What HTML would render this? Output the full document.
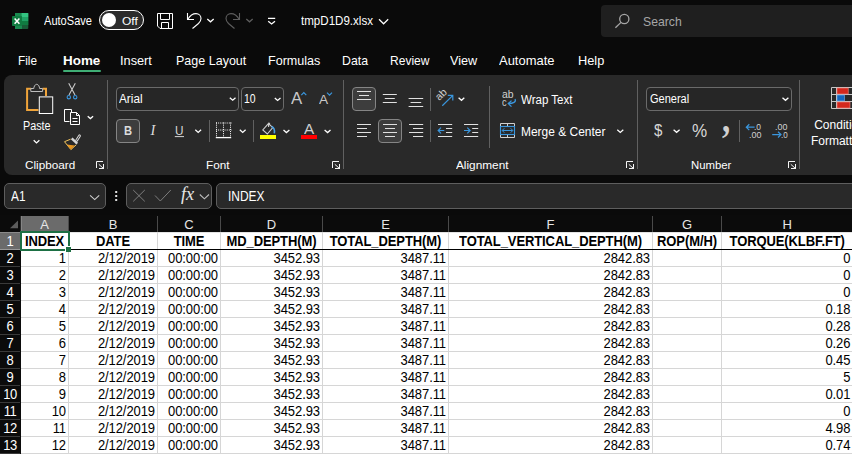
<!DOCTYPE html>
<html lang="en">
<head>
<meta charset="utf-8">
<title>tmpD1D9.xlsx - Excel</title>
<style>
html,body{margin:0;padding:0;overflow:hidden;}
body{width:852px;height:454px;overflow:hidden;background:#0a0a0a;position:relative;font-family:"Liberation Sans",sans-serif;color:#fff;}
.abs,.t,svg.i{position:absolute;}
.t{white-space:nowrap;line-height:1;transform-origin:0 0;}
svg.i{left:0;top:0;overflow:visible;pointer-events:none;}
.ribbon{left:4px;top:75px;width:860px;height:100px;background:#292929;border-radius:8px;}
.sep{background:#606060;width:1px;}
.combo{border:1px solid #6a6a6a;border-radius:4px;box-sizing:border-box;background:#262626;}
.btnsel{border:1px solid #858585;border-radius:4px;box-sizing:border-box;background:#3d3d3d;}
.fbox{border:1px solid #5e5e5e;border-radius:5px;box-sizing:border-box;background:#292929;}
.grid{left:0;top:215px;width:852px;height:239px;background:#0b0b0b;}
.cells{left:21px;top:233px;width:831px;height:221px;background:#fff;}
.hl{height:1px;left:21px;width:831px;background:#d6d6d6;}
.vl{width:1px;top:232px;height:222px;background:#d6d6d6;}
.hs{width:1px;top:216px;height:16px;background:#4a4a4a;}
.c{position:absolute;font-size:13px;line-height:17px;height:17px;color:#000;white-space:nowrap;box-sizing:border-box;transform:scaleY(1.07);transform-origin:0 13px;}
.r{text-align:right;padding-right:2px;letter-spacing:-0.08px;}
.m{text-align:center;}
.h{text-align:center;font-weight:bold;letter-spacing:-0.1px;}
.rh{position:absolute;left:0;width:20px;text-align:center;letter-spacing:-0.4px;font-size:13px;line-height:17px;height:17px;color:#fff;transform:scaleY(1.07);transform-origin:0 13px;}
.ch{position:absolute;top:216px;height:16px;line-height:17px;font-size:13px;text-align:center;color:#e6e6e6;}
</style>
</head>
<body>
<!-- ===== title bar ===== -->
<div class="abs" style="left:601px;top:5px;width:260px;height:32px;background:#1f1f1f;border-radius:4px;"></div>
<div class="abs" style="left:99px;top:10px;width:45px;height:20px;box-sizing:border-box;border:1px solid #fff;border-radius:10px;background:#2b2b2b;"></div>
<div class="abs" style="left:102px;top:13px;width:14px;height:14px;border-radius:7px;background:#fff;"></div>
<div class="abs" style="left:63px;top:70px;width:38px;height:2px;background:#3fae75;border-radius:1px;"></div>
<!-- ===== ribbon ===== -->
<div class="abs ribbon"></div>
<div class="abs sep" style="left:107px;top:80px;height:89px;"></div>
<div class="abs sep" style="left:343px;top:80px;height:89px;"></div>
<div class="abs sep" style="left:637px;top:80px;height:89px;"></div>
<div class="abs sep" style="left:799px;top:80px;height:89px;"></div>
<div class="abs sep" style="left:489px;top:86px;height:62px;"></div>
<div class="abs sep" style="left:209px;top:120px;height:22px;"></div>
<div class="abs sep" style="left:253px;top:120px;height:22px;"></div>
<div class="abs sep" style="left:430px;top:88px;height:23px;"></div>
<div class="abs sep" style="left:430px;top:120px;height:22px;"></div>
<div class="abs sep" style="left:739px;top:120px;height:22px;"></div>
<div class="abs combo" style="left:116px;top:87px;width:123px;height:24px;"></div>
<div class="abs combo" style="left:241px;top:87px;width:43px;height:24px;"></div>
<div class="abs combo" style="left:646px;top:87px;width:146px;height:24px;"></div>
<div class="abs btnsel" style="left:116px;top:119px;width:24px;height:24px;"></div>
<div class="abs btnsel" style="left:352px;top:87px;width:24px;height:24px;"></div>
<div class="abs btnsel" style="left:378px;top:119px;width:24px;height:24px;"></div>
<div class="abs" style="left:260px;top:135px;width:16px;height:4px;background:#ffff00;"></div>
<div class="abs" style="left:301px;top:135px;width:16px;height:4px;background:#ff0000;"></div>
<!-- ===== formula bar ===== -->
<div class="abs fbox" style="left:4px;top:183px;width:102px;height:26px;"></div>
<div class="abs fbox" style="left:126px;top:183px;width:86px;height:26px;"></div>
<div class="abs fbox" style="left:216px;top:183px;width:650px;height:26px;"></div>
<!-- ===== grid ===== -->
<div class="abs grid"></div>
<div class="abs" style="left:21px;top:216px;width:48px;height:16px;background:#6b6b6b;"></div>
<div class="abs" style="left:0;top:233px;width:20px;height:16px;background:#6b6b6b;"></div>
<div class="abs cells"></div>
<div class="abs" style="left:0;top:232px;width:852px;height:1px;background:#3a3a3a;"></div>
<div class="abs" style="left:0;top:232px;width:21px;height:1px;background:#8a8a8a;"></div>
<div class="abs" style="left:21px;top:232px;width:831px;height:1px;background:#e4e4e4;"></div>
<div class="ch" style="left:21px;width:47px;">A</div>
<div class="ch" style="left:69px;width:88px;">B</div>
<div class="ch" style="left:158px;width:62px;">C</div>
<div class="ch" style="left:221px;width:101px;">D</div>
<div class="ch" style="left:323px;width:125px;">E</div>
<div class="ch" style="left:449px;width:203px;">F</div>
<div class="ch" style="left:653px;width:68px;">G</div>
<div class="ch" style="left:722px;width:130.39999999999998px;">H</div>
<div class="abs hs" style="left:68px;"></div>
<div class="abs vl" style="left:68px;"></div>
<div class="abs hs" style="left:157px;"></div>
<div class="abs vl" style="left:157px;"></div>
<div class="abs hs" style="left:220px;"></div>
<div class="abs vl" style="left:220px;"></div>
<div class="abs hs" style="left:322px;"></div>
<div class="abs vl" style="left:322px;"></div>
<div class="abs hs" style="left:448px;"></div>
<div class="abs vl" style="left:448px;"></div>
<div class="abs hs" style="left:652px;"></div>
<div class="abs vl" style="left:652px;"></div>
<div class="abs hs" style="left:721px;"></div>
<div class="abs vl" style="left:721px;"></div>
<div class="abs hs" style="left:20px;background:#2a2a2a;"></div>
<div class="abs hs" style="left:21px;background:#858585;"></div>
<div class="rh" style="top:233px;">1</div>
<div class="abs hl" style="top:249px;background:#000;"></div>
<div class="abs" style="left:0;top:249px;width:20px;height:1px;background:#9a9a9a;"></div>
<div class="c h" style="left:21px;top:233px;width:47px;">INDEX</div>
<div class="c h" style="left:69px;top:233px;width:88px;">DATE</div>
<div class="c h" style="left:158px;top:233px;width:62px;">TIME</div>
<div class="c h" style="left:221px;top:233px;width:101px;">MD_DEPTH(M)</div>
<div class="c h" style="left:323px;top:233px;width:125px;">TOTAL_DEPTH(M)</div>
<div class="c h" style="left:449px;top:233px;width:203px;">TOTAL_VERTICAL_DEPTH(M)</div>
<div class="c h" style="left:653px;top:233px;width:68px;">ROP(M/H)</div>
<div class="c h" style="left:722px;top:233px;width:130.39999999999998px;">TORQUE(KLBF.FT)</div>
<div class="rh" style="top:250px;">2</div>
<div class="abs hl" style="top:266px;background:#d6d6d6;"></div>
<div class="abs" style="left:0;top:266px;width:20px;height:1px;background:#3a3a3a;"></div>
<div class="c r" style="left:21px;top:250px;width:47px;">1</div>
<div class="c r" style="left:69px;top:250px;width:88px;">2/12/2019</div>
<div class="c r" style="left:158px;top:250px;width:62px;">00:00:00</div>
<div class="c r" style="left:221px;top:250px;width:101px;">3452.93</div>
<div class="c r" style="left:323px;top:250px;width:125px;">3487.11</div>
<div class="c r" style="left:449px;top:250px;width:203px;">2842.83</div>
<div class="c r" style="left:722px;top:250px;width:130.39999999999998px;">0</div>
<div class="rh" style="top:267px;">3</div>
<div class="abs hl" style="top:283px;background:#d6d6d6;"></div>
<div class="abs" style="left:0;top:283px;width:20px;height:1px;background:#3a3a3a;"></div>
<div class="c r" style="left:21px;top:267px;width:47px;">2</div>
<div class="c r" style="left:69px;top:267px;width:88px;">2/12/2019</div>
<div class="c r" style="left:158px;top:267px;width:62px;">00:00:00</div>
<div class="c r" style="left:221px;top:267px;width:101px;">3452.93</div>
<div class="c r" style="left:323px;top:267px;width:125px;">3487.11</div>
<div class="c r" style="left:449px;top:267px;width:203px;">2842.83</div>
<div class="c r" style="left:722px;top:267px;width:130.39999999999998px;">0</div>
<div class="rh" style="top:284px;">4</div>
<div class="abs hl" style="top:300px;background:#d6d6d6;"></div>
<div class="abs" style="left:0;top:300px;width:20px;height:1px;background:#3a3a3a;"></div>
<div class="c r" style="left:21px;top:284px;width:47px;">3</div>
<div class="c r" style="left:69px;top:284px;width:88px;">2/12/2019</div>
<div class="c r" style="left:158px;top:284px;width:62px;">00:00:00</div>
<div class="c r" style="left:221px;top:284px;width:101px;">3452.93</div>
<div class="c r" style="left:323px;top:284px;width:125px;">3487.11</div>
<div class="c r" style="left:449px;top:284px;width:203px;">2842.83</div>
<div class="c r" style="left:722px;top:284px;width:130.39999999999998px;">0</div>
<div class="rh" style="top:301px;">5</div>
<div class="abs hl" style="top:317px;background:#d6d6d6;"></div>
<div class="abs" style="left:0;top:317px;width:20px;height:1px;background:#3a3a3a;"></div>
<div class="c r" style="left:21px;top:301px;width:47px;">4</div>
<div class="c r" style="left:69px;top:301px;width:88px;">2/12/2019</div>
<div class="c r" style="left:158px;top:301px;width:62px;">00:00:00</div>
<div class="c r" style="left:221px;top:301px;width:101px;">3452.93</div>
<div class="c r" style="left:323px;top:301px;width:125px;">3487.11</div>
<div class="c r" style="left:449px;top:301px;width:203px;">2842.83</div>
<div class="c r" style="left:722px;top:301px;width:130.39999999999998px;">0.18</div>
<div class="rh" style="top:318px;">6</div>
<div class="abs hl" style="top:334px;background:#d6d6d6;"></div>
<div class="abs" style="left:0;top:334px;width:20px;height:1px;background:#3a3a3a;"></div>
<div class="c r" style="left:21px;top:318px;width:47px;">5</div>
<div class="c r" style="left:69px;top:318px;width:88px;">2/12/2019</div>
<div class="c r" style="left:158px;top:318px;width:62px;">00:00:00</div>
<div class="c r" style="left:221px;top:318px;width:101px;">3452.93</div>
<div class="c r" style="left:323px;top:318px;width:125px;">3487.11</div>
<div class="c r" style="left:449px;top:318px;width:203px;">2842.83</div>
<div class="c r" style="left:722px;top:318px;width:130.39999999999998px;">0.28</div>
<div class="rh" style="top:335px;">7</div>
<div class="abs hl" style="top:351px;background:#d6d6d6;"></div>
<div class="abs" style="left:0;top:351px;width:20px;height:1px;background:#3a3a3a;"></div>
<div class="c r" style="left:21px;top:335px;width:47px;">6</div>
<div class="c r" style="left:69px;top:335px;width:88px;">2/12/2019</div>
<div class="c r" style="left:158px;top:335px;width:62px;">00:00:00</div>
<div class="c r" style="left:221px;top:335px;width:101px;">3452.93</div>
<div class="c r" style="left:323px;top:335px;width:125px;">3487.11</div>
<div class="c r" style="left:449px;top:335px;width:203px;">2842.83</div>
<div class="c r" style="left:722px;top:335px;width:130.39999999999998px;">0.26</div>
<div class="rh" style="top:352px;">8</div>
<div class="abs hl" style="top:368px;background:#d6d6d6;"></div>
<div class="abs" style="left:0;top:368px;width:20px;height:1px;background:#3a3a3a;"></div>
<div class="c r" style="left:21px;top:352px;width:47px;">7</div>
<div class="c r" style="left:69px;top:352px;width:88px;">2/12/2019</div>
<div class="c r" style="left:158px;top:352px;width:62px;">00:00:00</div>
<div class="c r" style="left:221px;top:352px;width:101px;">3452.93</div>
<div class="c r" style="left:323px;top:352px;width:125px;">3487.11</div>
<div class="c r" style="left:449px;top:352px;width:203px;">2842.83</div>
<div class="c r" style="left:722px;top:352px;width:130.39999999999998px;">0.45</div>
<div class="rh" style="top:369px;">9</div>
<div class="abs hl" style="top:385px;background:#d6d6d6;"></div>
<div class="abs" style="left:0;top:385px;width:20px;height:1px;background:#3a3a3a;"></div>
<div class="c r" style="left:21px;top:369px;width:47px;">8</div>
<div class="c r" style="left:69px;top:369px;width:88px;">2/12/2019</div>
<div class="c r" style="left:158px;top:369px;width:62px;">00:00:00</div>
<div class="c r" style="left:221px;top:369px;width:101px;">3452.93</div>
<div class="c r" style="left:323px;top:369px;width:125px;">3487.11</div>
<div class="c r" style="left:449px;top:369px;width:203px;">2842.83</div>
<div class="c r" style="left:722px;top:369px;width:130.39999999999998px;">5</div>
<div class="rh" style="top:386px;">10</div>
<div class="abs hl" style="top:402px;background:#d6d6d6;"></div>
<div class="abs" style="left:0;top:402px;width:20px;height:1px;background:#3a3a3a;"></div>
<div class="c r" style="left:21px;top:386px;width:47px;">9</div>
<div class="c r" style="left:69px;top:386px;width:88px;">2/12/2019</div>
<div class="c r" style="left:158px;top:386px;width:62px;">00:00:00</div>
<div class="c r" style="left:221px;top:386px;width:101px;">3452.93</div>
<div class="c r" style="left:323px;top:386px;width:125px;">3487.11</div>
<div class="c r" style="left:449px;top:386px;width:203px;">2842.83</div>
<div class="c r" style="left:722px;top:386px;width:130.39999999999998px;">0.01</div>
<div class="rh" style="top:403px;">11</div>
<div class="abs hl" style="top:419px;background:#d6d6d6;"></div>
<div class="abs" style="left:0;top:419px;width:20px;height:1px;background:#3a3a3a;"></div>
<div class="c r" style="left:21px;top:403px;width:47px;">10</div>
<div class="c r" style="left:69px;top:403px;width:88px;">2/12/2019</div>
<div class="c r" style="left:158px;top:403px;width:62px;">00:00:00</div>
<div class="c r" style="left:221px;top:403px;width:101px;">3452.93</div>
<div class="c r" style="left:323px;top:403px;width:125px;">3487.11</div>
<div class="c r" style="left:449px;top:403px;width:203px;">2842.83</div>
<div class="c r" style="left:722px;top:403px;width:130.39999999999998px;">0</div>
<div class="rh" style="top:420px;">12</div>
<div class="abs hl" style="top:436px;background:#d6d6d6;"></div>
<div class="abs" style="left:0;top:436px;width:20px;height:1px;background:#3a3a3a;"></div>
<div class="c r" style="left:21px;top:420px;width:47px;">11</div>
<div class="c r" style="left:69px;top:420px;width:88px;">2/12/2019</div>
<div class="c r" style="left:158px;top:420px;width:62px;">00:00:00</div>
<div class="c r" style="left:221px;top:420px;width:101px;">3452.93</div>
<div class="c r" style="left:323px;top:420px;width:125px;">3487.11</div>
<div class="c r" style="left:449px;top:420px;width:203px;">2842.83</div>
<div class="c r" style="left:722px;top:420px;width:130.39999999999998px;">4.98</div>
<div class="rh" style="top:437px;">13</div>
<div class="abs hl" style="top:453px;background:#d6d6d6;"></div>
<div class="abs" style="left:0;top:453px;width:20px;height:1px;background:#3a3a3a;"></div>
<div class="c r" style="left:21px;top:437px;width:47px;">12</div>
<div class="c r" style="left:69px;top:437px;width:88px;">2/12/2019</div>
<div class="c r" style="left:158px;top:437px;width:62px;">00:00:00</div>
<div class="c r" style="left:221px;top:437px;width:101px;">3452.93</div>
<div class="c r" style="left:323px;top:437px;width:125px;">3487.11</div>
<div class="c r" style="left:449px;top:437px;width:203px;">2842.83</div>
<div class="c r" style="left:722px;top:437px;width:130.39999999999998px;">0.74</div>
<div class="abs" style="left:20px;top:231px;width:50px;height:20px;box-sizing:border-box;border:2px solid #1d7044;"></div>
<div class="abs" style="left:65px;top:246px;width:6px;height:6px;box-sizing:border-box;background:#1d7044;border:1px solid #fff;border-right:0;border-bottom:0;"></div>
<!-- ===== icons ===== -->
<svg class="i" width="852" height="454" viewBox="0 0 852 454" fill="none" stroke-linecap="butt">
<!-- excel logo -->
<g stroke="none">
<rect x="15" y="13" width="13.3" height="16" rx="1" fill="#185c37"/>
<rect x="15" y="13" width="7" height="16" fill="#1a8a50"/>
<rect x="21.6" y="13" width="6.7" height="4" fill="#33c481"/>
<rect x="21.6" y="17" width="6.7" height="4" fill="#21a366"/>
<rect x="21.6" y="21" width="6.7" height="4" fill="#107c41"/>
<rect x="12" y="16" width="10" height="10" rx="0.8" fill="#107c41"/>
</g>
<path d="M14.6 18.4 L19.4 23.8 M19.4 18.4 L14.6 23.8" stroke="#fff" stroke-width="1.5"/>
<!-- save -->
<g stroke="#fff" stroke-width="1">
<path d="M157.5 13.5 H172.5 V28.5 H160 L157.5 26 Z"/>
<path d="M160.5 13.5 V19.5 H169.5 V13.5"/>
<path d="M161.5 28.5 V22.5 H168.5 V28.5"/>
</g>
<!-- undo -->
<path d="M187.5 13 V19.5 H194 M188 19 C190 15.5 193 13.6 196 13.6 C199 13.6 201 15.8 201 18.5 C201 20.5 200 22 198.5 23.5 L192.5 28.5" stroke="#fff" stroke-width="1.1"/>
<path d="M207.3 19 L210.5 21.8 L213.7 19" stroke="#fff" stroke-width="1.3"/>
<!-- redo -->
<path d="M239.5 13 V19.5 H233 M239 19 C237 15.5 234 13.6 231 13.6 C228 13.6 226 15.8 226 18.5 C226 20.5 227 22 228.5 23.5 L234.5 28.5" stroke="#5e5e5e" stroke-width="1.1"/>
<path d="M246.3 19 L249.5 21.8 L252.7 19" stroke="#5e5e5e" stroke-width="1.3"/>
<!-- qat -->
<path d="M268 18.3 H275.2 M268.2 21.2 L271.6 24 L275 21.2" stroke="#fff" stroke-width="1.3"/>
<!-- title chevron -->
<path d="M379 19.3 L383.6 23.8 L388.2 19.3" stroke="#fff" stroke-width="1.2"/>
<!-- search -->
<g stroke="#a6a6a6" stroke-width="1.3"><circle cx="624.3" cy="19" r="4.6"/><path d="M621 22.4 L615.4 27.8"/></g>
<path d="M33.7 140.3 L36.5 142.9 L39.4 140.3" stroke="#fff" stroke-width="1.3"/>
<path d="M87.7 116.3 L90.4 118.6 L93.1 116.3" stroke="#fff" stroke-width="1.3"/>
<path d="M229.8 97.7 L232.7 100.2 L235.5 97.7" stroke="#fff" stroke-width="1.3"/>
<path d="M274.8 97.9 L277.6 100.4 L280.5 97.9" stroke="#fff" stroke-width="1.3"/>
<path d="M195.3 129.8 L198.2 132.4 L201.1 129.8" stroke="#fff" stroke-width="1.3"/>
<path d="M239.8 129.8 L242.7 132.4 L245.6 129.8" stroke="#fff" stroke-width="1.3"/>
<path d="M283.5 130.0 L286.4 132.6 L289.4 130.0" stroke="#fff" stroke-width="1.3"/>
<path d="M324.6 130.0 L327.6 132.6 L330.5 130.0" stroke="#fff" stroke-width="1.3"/>
<path d="M458.6 97.7 L461.5 100.3 L464.3 97.7" stroke="#fff" stroke-width="1.3"/>
<path d="M617.3 129.8 L620.3 132.4 L623.3 129.8" stroke="#fff" stroke-width="1.3"/>
<path d="M673.6 129.8 L676.6 132.3 L679.6 129.8" stroke="#fff" stroke-width="1.3"/>
<path d="M782.5 97.7 L785.5 100.3 L788.4 97.7" stroke="#fff" stroke-width="1.3"/>
<path d="M90.1 195.3 L94.7 199.6 L99.2 195.3" stroke="#d0d0d0" stroke-width="1.1"/>
<path d="M199.8 194.5 L204.4 198.8 L209.0 194.5" stroke="#bdbdbd" stroke-width="1.1"/>
<path d="M103 161.5 H96.5 V168 M98.8 164.3 L103.5 168.5 M103.5 164 V169 M99 168.5 H104" stroke="#f4f4f4" stroke-width="1"/>
<path d="M339 161.5 H332.5 V168 M334.8 164.3 L339.5 168.5 M339.5 164 V169 M335 168.5 H340" stroke="#f4f4f4" stroke-width="1"/>
<path d="M633 161.5 H626.5 V168 M628.8 164.3 L633.5 168.5 M633.5 164 V169 M629 168.5 H634" stroke="#f4f4f4" stroke-width="1"/>
<path d="M795 161.5 H788.5 V168 M790.8 164.3 L795.5 168.5 M795.5 164 V169 M791 168.5 H796" stroke="#f4f4f4" stroke-width="1"/>
<path d="M31 88.7 H27.1 V110 H38.5 M42.5 88.7 H46 V96" stroke="#f0a43a" stroke-width="2"/>
<path d="M30.8 91.5 V88.5 H33.8 C33.8 86.8 35 84.3 36.7 84.3 C38.4 84.3 39.6 86.8 39.6 88.5 H42.6 V91.5 Z" stroke="#bdbdbd" stroke-width="1" fill="#292929"/>
<rect x="39.3" y="96.9" width="13.4" height="16.6" stroke="#fff" stroke-width="1" fill="#2b2b2b"/>
<path d="M68.7 83.3 L75 95 M75.3 83.3 L69 95" stroke="#c8c8c8" stroke-width="1.1"/>
<circle cx="68.8" cy="97.2" r="1.7" stroke="#3a96dd" stroke-width="1.1"/><circle cx="75.2" cy="97.2" r="1.7" stroke="#3a96dd" stroke-width="1.1"/>
<path d="M69.5 121.5 H64.5 V109.5 H71.5 V112" stroke="#fff" stroke-width="1"/>
<path d="M70.5 112.5 H76.5 L79.5 115.5 V124.5 H70.5 Z M76.5 112.5 V115.5 H79.5" stroke="#fff" stroke-width="1"/>
<path d="M72.5 118.5 H77.5 M72.5 121.5 H77.5" stroke="#fff" stroke-width="1"/>
<path d="M79.6 135.8 L76.6 140.4" stroke="#d6d6d6" stroke-width="2.8" stroke-linecap="round"/>
<path d="M79.6 135.8 L76.6 140.4" stroke="#292929" stroke-width="0.9" stroke-linecap="round"/>
<path d="M71.7 138.4 L77.2 143.7" stroke="#d6d6d6" stroke-width="2.4"/>
<path d="M70.6 139.2 L64.5 141.7 L70.9 149.6 L76.2 144.8" stroke="#f2c55f" stroke-width="1" stroke-linejoin="round"/>
<path d="M66.8 144.6 L74.8 145.6 L70.9 149.4 Z" fill="#e8951f" stroke="none"/>
<path d="M174.8 136.6 H184" stroke="#d6d6d6" stroke-width="1"/>
<g stroke="#fff" stroke-width="1" stroke-dasharray="1 1.14"><path d="M216 123 H231.5"/><path d="M216 130 H231.5"/><path d="M216.5 122.5 V136.5"/><path d="M223.5 122.5 V136.5"/><path d="M230.5 122.5 V136.5"/></g>
<path d="M215.8 137.6 H231.2" stroke="#fff" stroke-width="1.3"/>
<path d="M268.6 123.3 L262.8 130 L267.3 134 L272.8 127.6 L269.6 124.6 C269.9 123.4 268.6 122.6 268.6 123.3 V127" stroke="#d0d0d0" stroke-width="1.1"/>
<path d="M271.6 126.4 C274.2 127.6 274.8 130.5 274.3 133.3" stroke="#4a9fe0" stroke-width="1.6"/>
<path d="M301.3 95.2 L303.8 92.6 L306.3 95.2" stroke="#3a96dd" stroke-width="1.2"/>
<path d="M327 92.6 L329.5 95.2 L332 92.6" stroke="#3a96dd" stroke-width="1.2"/>
<path d="M357.0 91.5 H371.0" stroke="#e0e0e0" stroke-width="1"/>
<path d="M359.0 95.5 H369.0" stroke="#e0e0e0" stroke-width="1"/>
<path d="M357.0 99.5 H371.0" stroke="#e0e0e0" stroke-width="1"/>
<path d="M382.8 94.5 H396.8" stroke="#e0e0e0" stroke-width="1"/>
<path d="M384.8 98.5 H394.8" stroke="#e0e0e0" stroke-width="1"/>
<path d="M382.8 102.5 H396.8" stroke="#e0e0e0" stroke-width="1"/>
<path d="M408.6 98.5 H423.2" stroke="#e0e0e0" stroke-width="1"/>
<path d="M410.6 102.5 H421.2" stroke="#e0e0e0" stroke-width="1"/>
<path d="M408.6 106.5 H423.2" stroke="#e0e0e0" stroke-width="1"/>
<path d="M357.0 124.5 H371.0" stroke="#e0e0e0" stroke-width="1"/>
<path d="M357.0 128.5 H367.0" stroke="#e0e0e0" stroke-width="1"/>
<path d="M357.0 132.5 H371.0" stroke="#e0e0e0" stroke-width="1"/>
<path d="M357.0 136.5 H367.0" stroke="#e0e0e0" stroke-width="1"/>
<path d="M383.0 124.5 H397.0" stroke="#e0e0e0" stroke-width="1"/>
<path d="M385.0 128.5 H395.0" stroke="#e0e0e0" stroke-width="1"/>
<path d="M383.0 132.5 H397.0" stroke="#e0e0e0" stroke-width="1"/>
<path d="M385.0 136.5 H395.0" stroke="#e0e0e0" stroke-width="1"/>
<path d="M409.0 124.5 H423.2" stroke="#e0e0e0" stroke-width="1"/>
<path d="M413.0 128.5 H423.2" stroke="#e0e0e0" stroke-width="1"/>
<path d="M409.0 132.5 H423.2" stroke="#e0e0e0" stroke-width="1"/>
<path d="M413.0 136.5 H423.2" stroke="#e0e0e0" stroke-width="1"/>
<path d="M442.3 105.8 L452.6 95.6 M447.8 95.4 H452.8 V100.4" stroke="#3a96dd" stroke-width="1.2"/>
<path d="M438 124.5 H452.2 M438 136.5 H452.2" stroke="#e0e0e0" stroke-width="1"/>
<path d="M464 124.5 H478.2 M464 136.5 H478.2" stroke="#e0e0e0" stroke-width="1"/>
<path d="M446 128.5 H452.2 M446 132.5 H452.2" stroke="#e0e0e0" stroke-width="1"/>
<path d="M472.2 128.5 H478.2 M472.2 132.5 H478.2" stroke="#e0e0e0" stroke-width="1"/>
<path d="M444.3 130.5 H438.3 M441 127.7 L438.2 130.5 L441 133.3" stroke="#3a96dd" stroke-width="1.2"/>
<path d="M464 130.5 H470 M467.3 127.7 L470.1 130.5 L467.3 133.3" stroke="#3a96dd" stroke-width="1.2"/>
<path d="M515 99 C516.5 102 513 103.6 508.6 103.6 M511.5 100.6 L508.3 103.6 L511.5 106.6" stroke="#3a96dd" stroke-width="1.3"/>
<path d="M500.5 126 V123.5 H514.5 V126 M500.5 135 V137.5 H514.5 V135 M507.5 123.5 V126 M507.5 135 V137.5" stroke="#d0d0d0" stroke-width="1"/>
<rect x="500.5" y="126.5" width="14" height="8" stroke="#3a96dd" stroke-width="1.1"/>
<path d="M502.3 130.5 H512.7 M504.3 128.3 L502.2 130.5 L504.3 132.7 M510.7 128.3 L512.8 130.5 L510.7 132.7" stroke="#3a96dd" stroke-width="1"/>
<path d="M754.6 127.2 H746.4 M749.3 124.3 L746.3 127.2 L749.3 130.1" stroke="#3a96dd" stroke-width="1.2"/>
<path d="M772.2 134.6 H780.8 M778 131.7 L781 134.6 L778 137.5" stroke="#3a96dd" stroke-width="1.2"/>
<path d="M831.5 87.5 H853 M831.5 94.5 H853 M831.5 101.5 H853 M831.5 108.5 H853 M831.5 87.5 V108.5 M836.5 87.5 V108.5" stroke="#c8c8c8" stroke-width="1"/>
<rect x="837" y="88" width="11.2" height="6" fill="#d3281d" stroke="#f28b82" stroke-width="0.6"/>
<rect x="837" y="95" width="7.4" height="6" fill="#1467c0" stroke="#7db7ee" stroke-width="0.6"/>
<rect x="837" y="102" width="13" height="6" fill="#d3281d" stroke="#f28b82" stroke-width="0.6"/>
<g fill="#e0e0e0" stroke="none"><rect x="115.2" y="191" width="2" height="2"/><rect x="115.2" y="195" width="2" height="2"/><rect x="115.2" y="199" width="2" height="2"/></g>
<path d="M133.2 190 L144.8 201.4 M144.8 190 L133.2 201.4" stroke="#7d7d7d" stroke-width="1"/>
<path d="M155 195.5 L160.3 201 L170.8 190" stroke="#7d7d7d" stroke-width="1"/>
<path d="M18 220.5 V228.3 H10 Z" fill="#5c5c5c" stroke="none"/>
</svg>
<!-- ===== text ===== -->
<span class="t" style="left:44px;top:15.02px;font-size:12.2px;color:#fff;transform:scaleX(0.9081);">AutoSave</span>
<span class="t" style="left:121.6px;top:16.01px;font-size:11.4px;color:#fff;transform:scaleX(1.0544);">Off</span>
<span class="t" style="left:301px;top:15.01px;font-size:12.6px;color:#fff;transform:scaleX(0.9185);">tmpD1D9.xlsx</span>
<span class="t" style="left:643px;top:15.51px;font-size:12.6px;color:#a6a6a6;transform:scaleX(0.9698);">Search</span>
<span class="t" style="left:18px;top:55.01px;font-size:12.6px;color:#fff;transform:scaleX(0.9361);">File</span>
<span class="t" style="left:63px;top:55.01px;font-size:12.6px;color:#fff;font-weight:bold;transform:scaleX(1.0657);">Home</span>
<span class="t" style="left:120.2px;top:55.01px;font-size:12.6px;color:#fff;transform:scaleX(1.0127);">Insert</span>
<span class="t" style="left:175.7px;top:55.01px;font-size:12.6px;color:#fff;transform:scaleX(0.9939);">Page Layout</span>
<span class="t" style="left:268px;top:55.01px;font-size:12.6px;color:#fff;transform:scaleX(0.9984);">Formulas</span>
<span class="t" style="left:342.3px;top:55.01px;font-size:12.6px;color:#fff;transform:scaleX(0.9771);">Data</span>
<span class="t" style="left:390.4px;top:55.01px;font-size:12.6px;color:#fff;transform:scaleX(0.9565);">Review</span>
<span class="t" style="left:449.7px;top:55.01px;font-size:12.6px;color:#fff;transform:scaleX(1.0082);">View</span>
<span class="t" style="left:499px;top:55.01px;font-size:12.6px;color:#fff;transform:scaleX(1.0296);">Automate</span>
<span class="t" style="left:577.5px;top:55.01px;font-size:12.6px;color:#fff;transform:scaleX(1.0152);">Help</span>
<span class="t" style="left:23.3px;top:120.01px;font-size:12px;color:#fff;transform:scaleX(0.8994);">Paste</span>
<span class="t" style="left:24.5px;top:160.32px;font-size:11.3px;color:#fff;transform:scaleX(1.0381);">Clipboard</span>
<span class="t" style="left:118.7px;top:93.21px;font-size:12px;color:#fff;transform:scaleX(0.9827);">Arial</span>
<span class="t" style="left:244.0px;top:93.21px;font-size:12px;color:#fff;transform:scaleX(0.8683);">10</span>
<span class="t" style="left:206px;top:160.32px;font-size:11.3px;color:#fff;transform:scaleX(1.0394);">Font</span>
<span class="t" style="left:456.3px;top:160.32px;font-size:11.3px;color:#fff;transform:scaleX(1.0448);">Alignment</span>
<span class="t" style="left:520.5px;top:94.41px;font-size:12px;color:#fff;transform:scaleX(0.9612);">Wrap Text</span>
<span class="t" style="left:520.5px;top:126.41px;font-size:12px;color:#fff;transform:scaleX(0.9964);">Merge &amp; Center</span>
<span class="t" style="left:649.5px;top:93.21px;font-size:12px;color:#fff;transform:scaleX(0.9180);">General</span>
<span class="t" style="left:690.8px;top:160.32px;font-size:11.3px;color:#fff;transform:scaleX(1.0053);">Number</span>
<span class="t" style="left:814.2px;top:119.32px;font-size:12px;color:#fff;">Conditional</span>
<span class="t" style="left:810.9px;top:135.21px;font-size:12px;color:#fff;">Formatting</span>
<span class="t" style="left:124.2px;top:124.01px;font-size:13.5px;color:#dcdcdc;font-weight:bold;transform:scaleX(0.8308);">B</span>
<span class="t" style="left:150.6px;top:123.01px;font-size:14.5px;color:#dcdcdc;font-style:italic;font-family:'Liberation Serif',serif;">I</span>
<span class="t" style="left:175.2px;top:123.80px;font-size:13px;color:#d6d6d6;transform:scaleX(0.9052);">U</span>
<span class="t" style="left:653.5px;top:122.00px;font-size:17px;color:#d6d6d6;transform:scaleX(0.8871);">$</span>
<span class="t" style="left:691.5px;top:122.21px;font-size:18px;color:#d6d6d6;transform:scaleX(0.9491);">%</span>
<span class="t" style="left:10.9px;top:189.01px;font-size:14.4px;color:#fff;transform:scaleX(0.8234);">A1</span>
<span class="t" style="left:227.7px;top:189.01px;font-size:14.4px;color:#fff;transform:scaleX(0.8321);">INDEX</span>
<span class="t" style="left:180.8px;top:184.81px;font-size:18.5px;color:#e6e6e6;font-style:italic;font-family:'Liberation Serif',serif;transform:scaleX(0.9881);">fx</span>
<span class="t" style="left:291px;top:90.00px;font-size:17px;color:#c8c8c8;transform:scaleX(0.9873);">A</span>
<span class="t" style="left:318.7px;top:93.00px;font-size:13.2px;color:#c8c8c8;transform:scaleX(1.0345);">A</span>
<span class="t" style="left:304.2px;top:121.81px;font-size:14.8px;color:#d0d0d0;transform:scaleX(1.0329);">A</span>
<span class="t" style="left:502.1px;top:90.11px;font-size:10px;color:#d0d0d0;transform:scaleX(1.0427);">ab</span>
<span class="t" style="left:502.2px;top:97.72px;font-size:10px;color:#d0d0d0;transform:scaleX(0.9200);">c</span>
<span class="t" style="left:754.2px;top:121.52px;font-size:9.8px;color:#d0d0d0;transform:scaleX(0.8688);">.0</span>
<span class="t" style="left:748.8px;top:129.91px;font-size:9.8px;color:#d0d0d0;transform:scaleX(0.9174);">.00</span>
<span class="t" style="left:774.9px;top:121.52px;font-size:9.8px;color:#d0d0d0;transform:scaleX(0.9101);">.00</span>
<span class="t" style="left:780.6px;top:129.91px;font-size:9.8px;color:#d0d0d0;transform:scaleX(0.8199);">.0</span>
<span class="t" style="left:721.6px;top:98.21px;font-size:41px;color:#d0d0d0;font-weight:bold;font-family:'Liberation Serif',serif;transform:scaleX(0.8000);">,</span>
<span class="t" style="left:435.4px;top:89.2px;font-size:10.5px;color:#d0d0d0;transform-origin:50% 50%;transform:rotate(-45deg);">ab</span>
</body>
</html>
